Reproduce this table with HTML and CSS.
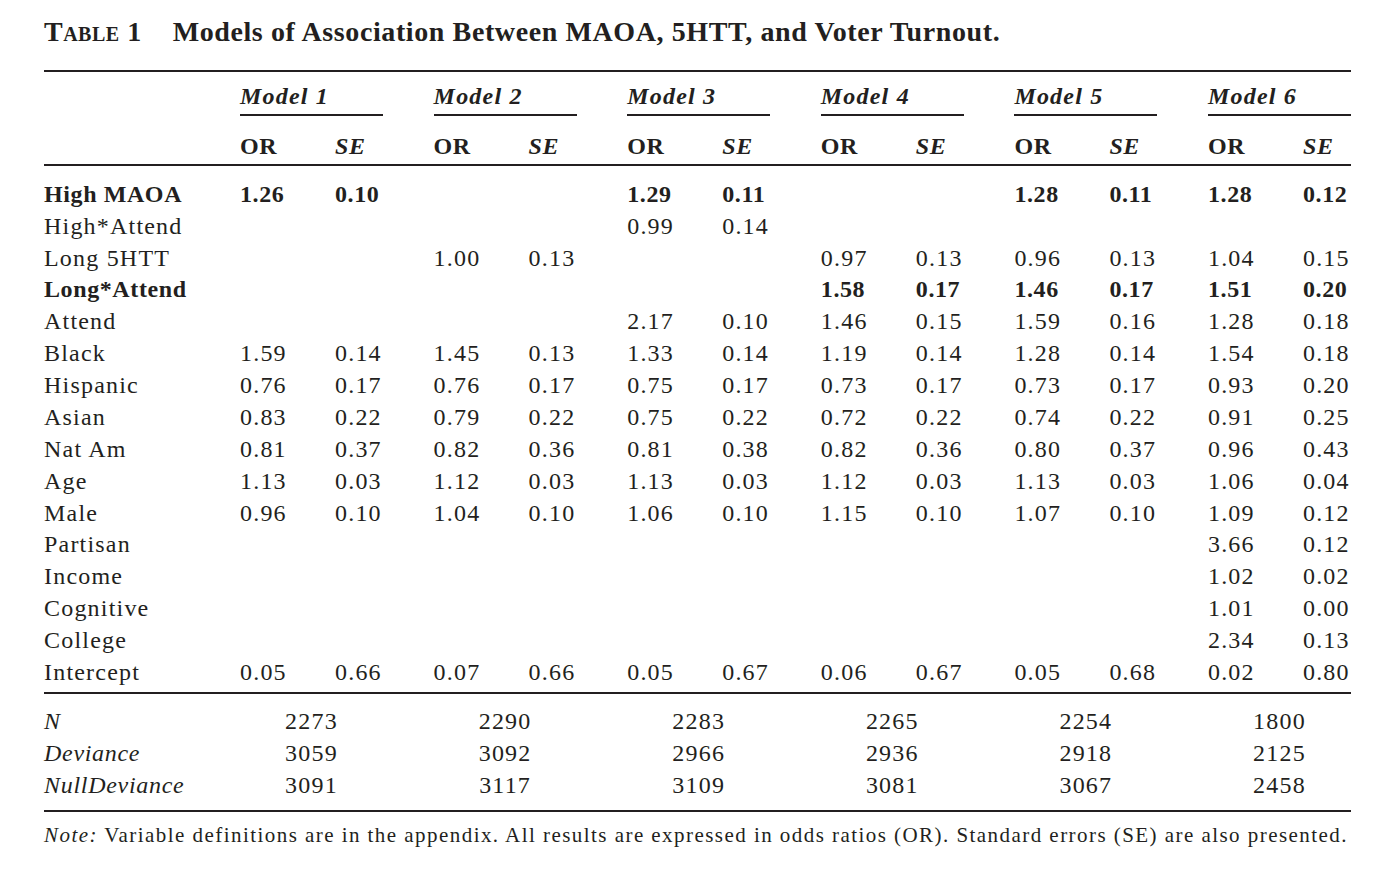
FILE: index.html
```html
<!DOCTYPE html>
<html>
<head>
<meta charset="utf-8">
<link rel="stylesheet" href="styles.css">
</head>
<body>
<div class="page">
  <div class="title"><span class="tlabel">Table 1</span><span class="ttext">Models of Association Between MAOA, 5HTT, and Voter Turnout.</span></div>
  <table class="tbl">
    <colgroup>
      <col class="c-label">
      <col class="c-or"><col class="c-se"><col class="c-gap">
      <col class="c-or"><col class="c-se"><col class="c-gap">
      <col class="c-or"><col class="c-se"><col class="c-gap">
      <col class="c-or"><col class="c-se"><col class="c-gap">
      <col class="c-or"><col class="c-se"><col class="c-gap">
      <col class="c-or"><col class="c-se">
    </colgroup>
    <thead>
      <tr class="r-model">
        <td></td>
        <td colspan="2" class="model">Model 1</td><td></td>
        <td colspan="2" class="model">Model 2</td><td></td>
        <td colspan="2" class="model">Model 3</td><td></td>
        <td colspan="2" class="model">Model 4</td><td></td>
        <td colspan="2" class="model">Model 5</td><td></td>
        <td colspan="2" class="model">Model 6</td>
      </tr>
      <tr class="r-sub">
        <td></td>
        <td class="or">OR</td><td class="se">SE</td><td></td>
        <td class="or">OR</td><td class="se">SE</td><td></td>
        <td class="or">OR</td><td class="se">SE</td><td></td>
        <td class="or">OR</td><td class="se">SE</td><td></td>
        <td class="or">OR</td><td class="se">SE</td><td></td>
        <td class="or">OR</td><td class="se">SE</td>
      </tr>
    </thead>
    <tbody class="coef">
      <tr class="b first"><td>High MAOA</td><td>1.26</td><td>0.10</td><td></td><td></td><td></td><td></td><td>1.29</td><td>0.11</td><td></td><td></td><td></td><td></td><td>1.28</td><td>0.11</td><td></td><td>1.28</td><td>0.12</td></tr>
      <tr><td>High*Attend</td><td></td><td></td><td></td><td></td><td></td><td></td><td>0.99</td><td>0.14</td><td></td><td></td><td></td><td></td><td></td><td></td><td></td><td></td><td></td></tr>
      <tr><td>Long 5HTT</td><td></td><td></td><td></td><td>1.00</td><td>0.13</td><td></td><td></td><td></td><td></td><td>0.97</td><td>0.13</td><td></td><td>0.96</td><td>0.13</td><td></td><td>1.04</td><td>0.15</td></tr>
      <tr class="b"><td>Long*Attend</td><td></td><td></td><td></td><td></td><td></td><td></td><td></td><td></td><td></td><td>1.58</td><td>0.17</td><td></td><td>1.46</td><td>0.17</td><td></td><td>1.51</td><td>0.20</td></tr>
      <tr><td>Attend</td><td></td><td></td><td></td><td></td><td></td><td></td><td>2.17</td><td>0.10</td><td></td><td>1.46</td><td>0.15</td><td></td><td>1.59</td><td>0.16</td><td></td><td>1.28</td><td>0.18</td></tr>
      <tr><td>Black</td><td>1.59</td><td>0.14</td><td></td><td>1.45</td><td>0.13</td><td></td><td>1.33</td><td>0.14</td><td></td><td>1.19</td><td>0.14</td><td></td><td>1.28</td><td>0.14</td><td></td><td>1.54</td><td>0.18</td></tr>
      <tr><td>Hispanic</td><td>0.76</td><td>0.17</td><td></td><td>0.76</td><td>0.17</td><td></td><td>0.75</td><td>0.17</td><td></td><td>0.73</td><td>0.17</td><td></td><td>0.73</td><td>0.17</td><td></td><td>0.93</td><td>0.20</td></tr>
      <tr><td>Asian</td><td>0.83</td><td>0.22</td><td></td><td>0.79</td><td>0.22</td><td></td><td>0.75</td><td>0.22</td><td></td><td>0.72</td><td>0.22</td><td></td><td>0.74</td><td>0.22</td><td></td><td>0.91</td><td>0.25</td></tr>
      <tr><td>Nat Am</td><td>0.81</td><td>0.37</td><td></td><td>0.82</td><td>0.36</td><td></td><td>0.81</td><td>0.38</td><td></td><td>0.82</td><td>0.36</td><td></td><td>0.80</td><td>0.37</td><td></td><td>0.96</td><td>0.43</td></tr>
      <tr><td>Age</td><td>1.13</td><td>0.03</td><td></td><td>1.12</td><td>0.03</td><td></td><td>1.13</td><td>0.03</td><td></td><td>1.12</td><td>0.03</td><td></td><td>1.13</td><td>0.03</td><td></td><td>1.06</td><td>0.04</td></tr>
      <tr><td>Male</td><td>0.96</td><td>0.10</td><td></td><td>1.04</td><td>0.10</td><td></td><td>1.06</td><td>0.10</td><td></td><td>1.15</td><td>0.10</td><td></td><td>1.07</td><td>0.10</td><td></td><td>1.09</td><td>0.12</td></tr>
      <tr><td>Partisan</td><td></td><td></td><td></td><td></td><td></td><td></td><td></td><td></td><td></td><td></td><td></td><td></td><td></td><td></td><td></td><td>3.66</td><td>0.12</td></tr>
      <tr><td>Income</td><td></td><td></td><td></td><td></td><td></td><td></td><td></td><td></td><td></td><td></td><td></td><td></td><td></td><td></td><td></td><td>1.02</td><td>0.02</td></tr>
      <tr><td>Cognitive</td><td></td><td></td><td></td><td></td><td></td><td></td><td></td><td></td><td></td><td></td><td></td><td></td><td></td><td></td><td></td><td>1.01</td><td>0.00</td></tr>
      <tr><td>College</td><td></td><td></td><td></td><td></td><td></td><td></td><td></td><td></td><td></td><td></td><td></td><td></td><td></td><td></td><td></td><td>2.34</td><td>0.13</td></tr>
      <tr class="last"><td>Intercept</td><td>0.05</td><td>0.66</td><td></td><td>0.07</td><td>0.66</td><td></td><td>0.05</td><td>0.67</td><td></td><td>0.06</td><td>0.67</td><td></td><td>0.05</td><td>0.68</td><td></td><td>0.02</td><td>0.80</td></tr>
    </tbody>
    <tbody class="stats">
      <tr class="first"><td class="sl">N</td><td colspan="2">2273</td><td></td><td colspan="2">2290</td><td></td><td colspan="2">2283</td><td></td><td colspan="2">2265</td><td></td><td colspan="2">2254</td><td></td><td colspan="2">1800</td></tr>
      <tr><td class="sl">Deviance</td><td colspan="2">3059</td><td></td><td colspan="2">3092</td><td></td><td colspan="2">2966</td><td></td><td colspan="2">2936</td><td></td><td colspan="2">2918</td><td></td><td colspan="2">2125</td></tr>
      <tr class="last"><td class="sl">NullDeviance</td><td colspan="2">3091</td><td></td><td colspan="2">3117</td><td></td><td colspan="2">3109</td><td></td><td colspan="2">3081</td><td></td><td colspan="2">3067</td><td></td><td colspan="2">2458</td></tr>
    </tbody>
  </table>
  <p class="note"><em>Note:</em> Variable definitions are in the appendix. All results are expressed in odds ratios (OR). Standard errors (SE) are also presented.</p>
</div>
</body>
</html>
```

FILE: styles.css
```css
html, body {
  margin: 0;
  padding: 0;
  background: #ffffff;
}

body {
  font-family: "Liberation Serif", "Times New Roman", serif;
  color: #231f20;
}

.page {
  padding: 16px 0 0 44px;
}

.title {
  font-size: 28px;
  line-height: 32px;
  font-weight: bold;
  white-space: nowrap;
}

.tlabel {
  font-variant: small-caps;
  margin-right: 31px;
  letter-spacing: 0.5px;
}

.ttext {
  letter-spacing: 0.6px;
}

.tbl {
  margin-top: 22px;
  border-collapse: collapse;
  table-layout: fixed;
  width: 1307px;
  font-size: 24px;
  letter-spacing: 1.2px;
}

.c-label { width: 196px; }
.c-or { width: 95px; }
.c-se { width: 48px; }
.c-gap { width: 50.6px; }

.tbl td {
  padding: 0;
  line-height: 31.87px;
  text-align: left;
  white-space: nowrap;
  vertical-align: top;
}

.r-model td {
  border-top: 2px solid #231f20;
  padding-top: 9px;
  padding-bottom: 1px;
}

.r-model td.model {
  font-style: italic;
  font-weight: bold;
  letter-spacing: 1.2px;
  border-bottom: 2px solid #231f20;
}

.r-sub td {
  font-weight: bold;
  letter-spacing: 0.6px;
  padding-top: 15px;
  padding-bottom: 1px;
  border-bottom: 2px solid #231f20;
}

.r-sub td.se {
  font-style: italic;
}

.coef tr.b td {
  font-weight: bold;
  letter-spacing: 0.6px;
}

.coef tr.first td {
  padding-top: 13px;
}

.coef tr.last td {
  padding-bottom: 3px;
  border-bottom: 2px solid #231f20;
}

.stats td {
  text-align: center;
}

.stats td.sl {
  text-align: left;
  font-style: italic;
  letter-spacing: 0.7px;
}

.stats tr.first td {
  padding-top: 12px;
}

.stats tr.last td {
  padding-bottom: 9px;
  border-bottom: 2px solid #231f20;
}

.note {
  margin: 8px 0 0 0;
  font-size: 21px;
  line-height: 30px;
  letter-spacing: 1.45px;
  white-space: nowrap;
}
```
